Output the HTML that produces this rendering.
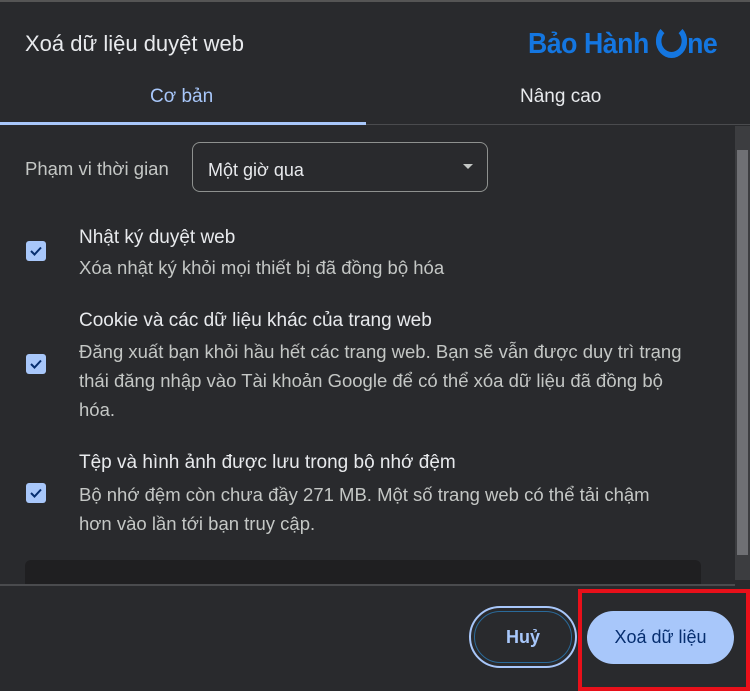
<!DOCTYPE html>
<html><head><meta charset="utf-8"><style>
body{margin:0;width:750px;height:691px;background:#292a2d;font-family:"Liberation Sans",Arial,sans-serif;color:#e8eaed;position:relative;overflow:hidden}
.a{position:absolute}
.t{font-size:19px}
.s{font-size:18.5px;color:#c4c7c5;white-space:nowrap}
.cb{position:absolute;left:26px;width:20px;height:20px;background:#a8c7fa;border-radius:3px}
.cb svg{position:absolute;left:2px;top:2px}
</style></head><body>
<div class="a" style="left:0;top:0;width:750px;height:2px;background:#555"></div>
<div class="a" style="left:25px;top:31px;font-size:22px">Xoá dữ liệu duyệt web</div>
<div class="a" style="left:528px;top:24px;font-size:29px;font-weight:bold;color:#1476e0;letter-spacing:-0.5px;transform:scaleX(0.92);transform-origin:left;white-space:nowrap">Bảo Hành <span style="display:inline-block;width:34px;height:34px;border:6px solid #1476e0;border-radius:50%;border-top-color:transparent;box-sizing:border-box;vertical-align:-5px"></span>ne</div>
<div class="a" style="left:150px;top:86px;font-size:19px;color:#a8c7fa">Cơ bản</div>
<div class="a" style="left:520px;top:86px;font-size:19px">Nâng cao</div>
<div class="a" style="left:0;top:122px;width:366px;height:3px;background:#a8c7fa"></div>
<div class="a" style="left:366px;top:124px;width:384px;height:1px;background:#4a4b4e"></div>
<div class="a" style="left:735px;top:126px;width:15px;height:454px;background:#3c3d40"></div>
<div class="a" style="left:737px;top:150px;width:11px;height:405px;background:#6f7074"></div>
<div class="a" style="left:25px;top:158px;font-size:18.5px;color:#c4c7c5">Phạm vi thời gian</div>
<div class="a" style="left:192px;top:142px;width:296px;height:50px;border:1px solid #8e918f;border-radius:8px;box-sizing:border-box"></div>
<div class="a" style="left:208px;top:160px;font-size:18px">Một giờ qua</div>
<div class="a" style="left:463px;top:164px;width:0;height:0;border-left:5px solid transparent;border-right:5px solid transparent;border-top:5px solid #c4c7c5"></div>

<div class="cb" style="top:241px"><svg width="16" height="16"><path d="M3 8l3.5 3.5L13 4.5" stroke="#062e6f" stroke-width="2" fill="none"/></svg></div>
<div class="a t" style="left:79px;top:227px">Nhật ký duyệt web</div>
<div class="a s" style="left:79px;top:257px">Xóa nhật ký khỏi mọi thiết bị đã đồng bộ hóa</div>

<div class="cb" style="top:354px"><svg width="16" height="16"><path d="M3 8l3.5 3.5L13 4.5" stroke="#062e6f" stroke-width="2" fill="none"/></svg></div>
<div class="a t" style="left:79px;top:310px">Cookie và các dữ liệu khác của trang web</div>
<div class="a s" style="left:79px;top:337px;line-height:29px">Đăng xuất bạn khỏi hầu hết các trang web. Bạn sẽ vẫn được duy trì trạng<br>thái đăng nhập vào Tài khoản Google để có thể xóa dữ liệu đã đồng bộ<br>hóa.</div>

<div class="cb" style="top:483px"><svg width="16" height="16"><path d="M3 8l3.5 3.5L13 4.5" stroke="#062e6f" stroke-width="2" fill="none"/></svg></div>
<div class="a t" style="left:79px;top:452px">Tệp và hình ảnh được lưu trong bộ nhớ đệm</div>
<div class="a s" style="left:79px;top:480px;line-height:29px">Bộ nhớ đệm còn chưa đầy 271 MB. Một số trang web có thể tải chậm<br>hơn vào lần tới bạn truy cập.</div>

<div class="a" style="left:25px;top:560px;width:676px;height:30px;background:#1f1f21;border-radius:6px"></div>
<div class="a" style="left:0;top:584px;width:735px;height:2px;background:#4a4b4e"></div>
<div class="a" style="left:0;top:586px;width:750px;height:105px;background:#292a2d"></div>

<div class="a" style="left:469px;top:606px;width:108px;height:62px;border:2px solid #a8c7fa;border-radius:31px;box-sizing:border-box"></div>
<div class="a" style="left:474px;top:611px;width:98px;height:52px;border:1px solid #2a6a9a;border-radius:26px;box-sizing:border-box;text-align:center;line-height:50px;font-size:18px;font-weight:bold;color:#a8c7fa">Huỷ</div>
<div class="a" style="left:587px;top:611px;width:147px;height:53px;background:#a8c7fa;border-radius:27px;text-align:center;line-height:53px;font-size:18px;color:#062e6f">Xoá dữ liệu</div>
<div class="a" style="left:578px;top:589px;width:172px;height:102px;border:4px solid #e8101a;box-sizing:border-box"></div>
</body></html>
